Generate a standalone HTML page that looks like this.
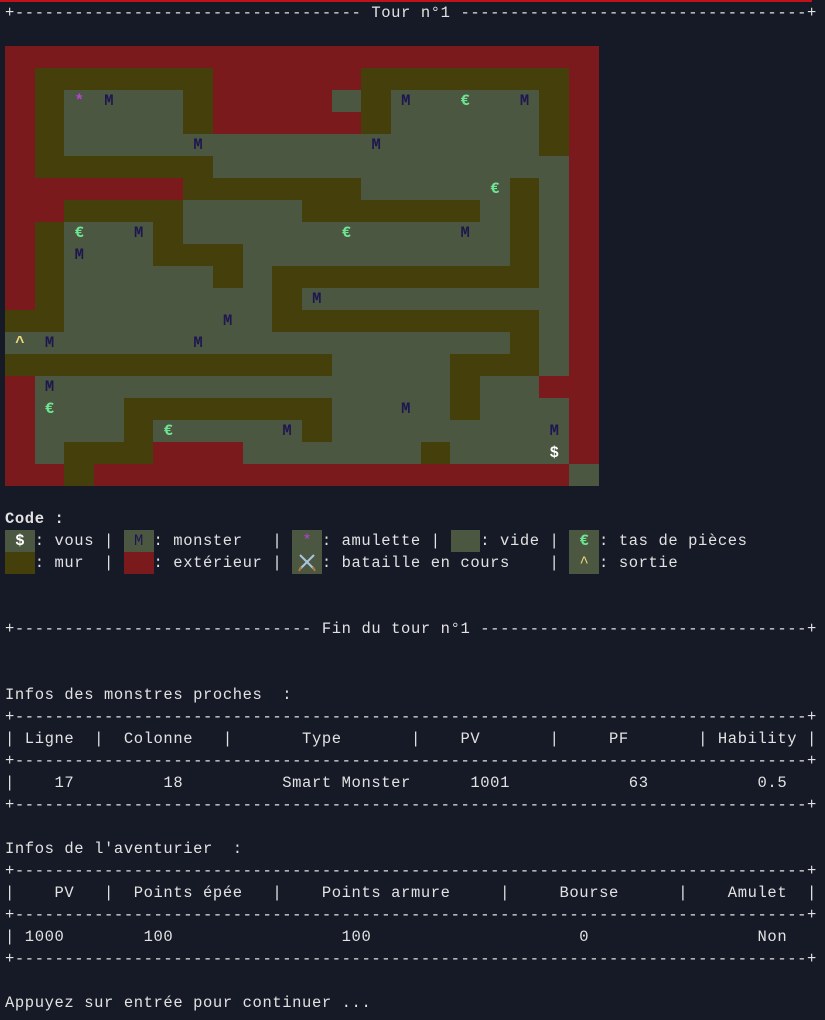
<!DOCTYPE html>
<html><head><meta charset="utf-8"><style>
html,body{margin:0;padding:0;background:#161926;width:825px;height:1020px;overflow:hidden}
body{position:relative;font-family:"Liberation Mono","DejaVu Sans Mono",monospace;font-size:15.5px;letter-spacing:0.6px;color:#e2e2e2}
.topline{position:absolute;left:0;top:0;width:812px;height:2px;background:#c1121a}
.l{position:absolute;left:5px;white-space:pre;line-height:22px;height:22px}
.maze{position:absolute;left:5px;top:46px;width:594px;letter-spacing:0}
.row{display:flex;height:22px}
.row b{display:block;width:29.7px;height:22px;line-height:22px;text-align:center;font-weight:bold}
.R{background:#7b1a1c}.W{background:#453f0b}.E{background:#4c5741}
.m{color:#1d1650}.g{color:#6ee592}.s{color:#b543d4}.x{color:#eedb7d}.d{color:#fff}
.c{display:inline-block;width:29.7px;height:22px;vertical-align:top;text-align:center;letter-spacing:0}
.bb{font-weight:bold}
</style></head><body>
<div class="topline"></div>
<div class="l" style="top:2px">+----------------------------------- Tour n°1 -----------------------------------+</div>
<div class="maze">
<div class="row"><b class=R></b><b class=R></b><b class=R></b><b class=R></b><b class=R></b><b class=R></b><b class=R></b><b class=R></b><b class=R></b><b class=R></b><b class=R></b><b class=R></b><b class=R></b><b class=R></b><b class=R></b><b class=R></b><b class=R></b><b class=R></b><b class=R></b><b class=R></b></div>
<div class="row"><b class=R></b><b class=W></b><b class=W></b><b class=W></b><b class=W></b><b class=W></b><b class=W></b><b class=R></b><b class=R></b><b class=R></b><b class=R></b><b class=R></b><b class=W></b><b class=W></b><b class=W></b><b class=W></b><b class=W></b><b class=W></b><b class=W></b><b class=R></b></div>
<div class="row"><b class=R></b><b class=W></b><b class="E s">*</b><b class="E m">M</b><b class=E></b><b class=E></b><b class=W></b><b class=R></b><b class=R></b><b class=R></b><b class=R></b><b class=E></b><b class=W></b><b class="E m">M</b><b class=E></b><b class="E g">€</b><b class=E></b><b class="E m">M</b><b class=W></b><b class=R></b></div>
<div class="row"><b class=R></b><b class=W></b><b class=E></b><b class=E></b><b class=E></b><b class=E></b><b class=W></b><b class=R></b><b class=R></b><b class=R></b><b class=R></b><b class=R></b><b class=W></b><b class=E></b><b class=E></b><b class=E></b><b class=E></b><b class=E></b><b class=W></b><b class=R></b></div>
<div class="row"><b class=R></b><b class=W></b><b class=E></b><b class=E></b><b class=E></b><b class=E></b><b class="E m">M</b><b class=E></b><b class=E></b><b class=E></b><b class=E></b><b class=E></b><b class="E m">M</b><b class=E></b><b class=E></b><b class=E></b><b class=E></b><b class=E></b><b class=W></b><b class=R></b></div>
<div class="row"><b class=R></b><b class=W></b><b class=W></b><b class=W></b><b class=W></b><b class=W></b><b class=W></b><b class=E></b><b class=E></b><b class=E></b><b class=E></b><b class=E></b><b class=E></b><b class=E></b><b class=E></b><b class=E></b><b class=E></b><b class=E></b><b class=E></b><b class=R></b></div>
<div class="row"><b class=R></b><b class=R></b><b class=R></b><b class=R></b><b class=R></b><b class=R></b><b class=W></b><b class=W></b><b class=W></b><b class=W></b><b class=W></b><b class=W></b><b class=E></b><b class=E></b><b class=E></b><b class=E></b><b class="E g">€</b><b class=W></b><b class=E></b><b class=R></b></div>
<div class="row"><b class=R></b><b class=R></b><b class=W></b><b class=W></b><b class=W></b><b class=W></b><b class=E></b><b class=E></b><b class=E></b><b class=E></b><b class=W></b><b class=W></b><b class=W></b><b class=W></b><b class=W></b><b class=W></b><b class=E></b><b class=W></b><b class=E></b><b class=R></b></div>
<div class="row"><b class=R></b><b class=W></b><b class="E g">€</b><b class=E></b><b class="E m">M</b><b class=W></b><b class=E></b><b class=E></b><b class=E></b><b class=E></b><b class=E></b><b class="E g">€</b><b class=E></b><b class=E></b><b class=E></b><b class="E m">M</b><b class=E></b><b class=W></b><b class=E></b><b class=R></b></div>
<div class="row"><b class=R></b><b class=W></b><b class="E m">M</b><b class=E></b><b class=E></b><b class=W></b><b class=W></b><b class=W></b><b class=E></b><b class=E></b><b class=E></b><b class=E></b><b class=E></b><b class=E></b><b class=E></b><b class=E></b><b class=E></b><b class=W></b><b class=E></b><b class=R></b></div>
<div class="row"><b class=R></b><b class=W></b><b class=E></b><b class=E></b><b class=E></b><b class=E></b><b class=E></b><b class=W></b><b class=E></b><b class=W></b><b class=W></b><b class=W></b><b class=W></b><b class=W></b><b class=W></b><b class=W></b><b class=W></b><b class=W></b><b class=E></b><b class=R></b></div>
<div class="row"><b class=R></b><b class=W></b><b class=E></b><b class=E></b><b class=E></b><b class=E></b><b class=E></b><b class=E></b><b class=E></b><b class=W></b><b class="E m">M</b><b class=E></b><b class=E></b><b class=E></b><b class=E></b><b class=E></b><b class=E></b><b class=E></b><b class=E></b><b class=R></b></div>
<div class="row"><b class=W></b><b class=W></b><b class=E></b><b class=E></b><b class=E></b><b class=E></b><b class=E></b><b class="E m">M</b><b class=E></b><b class=W></b><b class=W></b><b class=W></b><b class=W></b><b class=W></b><b class=W></b><b class=W></b><b class=W></b><b class=W></b><b class=E></b><b class=R></b></div>
<div class="row"><b class="E x">^</b><b class="E m">M</b><b class=E></b><b class=E></b><b class=E></b><b class=E></b><b class="E m">M</b><b class=E></b><b class=E></b><b class=E></b><b class=E></b><b class=E></b><b class=E></b><b class=E></b><b class=E></b><b class=E></b><b class=E></b><b class=W></b><b class=E></b><b class=R></b></div>
<div class="row"><b class=W></b><b class=W></b><b class=W></b><b class=W></b><b class=W></b><b class=W></b><b class=W></b><b class=W></b><b class=W></b><b class=W></b><b class=W></b><b class=E></b><b class=E></b><b class=E></b><b class=E></b><b class=W></b><b class=W></b><b class=W></b><b class=E></b><b class=R></b></div>
<div class="row"><b class=R></b><b class="E m">M</b><b class=E></b><b class=E></b><b class=E></b><b class=E></b><b class=E></b><b class=E></b><b class=E></b><b class=E></b><b class=E></b><b class=E></b><b class=E></b><b class=E></b><b class=E></b><b class=W></b><b class=E></b><b class=E></b><b class=R></b><b class=R></b></div>
<div class="row"><b class=R></b><b class="E g">€</b><b class=E></b><b class=E></b><b class=W></b><b class=W></b><b class=W></b><b class=W></b><b class=W></b><b class=W></b><b class=W></b><b class=E></b><b class=E></b><b class="E m">M</b><b class=E></b><b class=W></b><b class=E></b><b class=E></b><b class=E></b><b class=R></b></div>
<div class="row"><b class=R></b><b class=E></b><b class=E></b><b class=E></b><b class=W></b><b class="E g">€</b><b class=E></b><b class=E></b><b class=E></b><b class="E m">M</b><b class=W></b><b class=E></b><b class=E></b><b class=E></b><b class=E></b><b class=E></b><b class=E></b><b class=E></b><b class="E m">M</b><b class=R></b></div>
<div class="row"><b class=R></b><b class=E></b><b class=W></b><b class=W></b><b class=W></b><b class=R></b><b class=R></b><b class=R></b><b class=E></b><b class=E></b><b class=E></b><b class=E></b><b class=E></b><b class=E></b><b class=W></b><b class=E></b><b class=E></b><b class=E></b><b class="E d">$</b><b class=R></b></div>
<div class="row"><b class=R></b><b class=R></b><b class=W></b><b class=R></b><b class=R></b><b class=R></b><b class=R></b><b class=R></b><b class=R></b><b class=R></b><b class=R></b><b class=R></b><b class=R></b><b class=R></b><b class=R></b><b class=R></b><b class=R></b><b class=R></b><b class=R></b><b class=E></b></div>
</div>
<div class="l" style="top:508px;font-weight:bold">Code :</div>
<div class="l" style="top:530px"><span class="c E d bb">$</span>: vous | <span class="c E m">M</span>: monster   | <span class="c E s">*</span>: amulette | <span class="c E"></span>: vide | <span class="c E g bb">€</span>: tas de pièces</div>
<div class="l" style="top:552px"><span class="c W"></span>: mur  | <span class="c R"></span>: extérieur | <span class="c E"><svg width="22" height="22" viewBox="0 0 22 22"><path d="M4 3 L18 17 M18 3 L4 17" stroke="#a9c6de" stroke-width="2"/><path d="M5 15 L3 19 M17 15 L19 19" stroke="#b0783a" stroke-width="2"/></svg></span>: bataille en cours    | <span class="c E x">^</span>: sortie</div>
<div class="l" style="top:618px">+------------------------------ Fin du tour n°1 ---------------------------------+</div>
<div class="l" style="top:684px">Infos des monstres proches  :</div>
<div class="l" style="top:706px">+--------------------------------------------------------------------------------+</div>
<div class="l" style="top:728px">| Ligne  |  Colonne   |       Type       |    PV       |     PF       | Hability |</div>
<div class="l" style="top:750px">+--------------------------------------------------------------------------------+</div>
<div class="l" style="top:772px">|    17         18          Smart Monster      1001            63           0.5</div>
<div class="l" style="top:794px">+--------------------------------------------------------------------------------+</div>
<div class="l" style="top:838px">Infos de l'aventurier  :</div>
<div class="l" style="top:860px">+--------------------------------------------------------------------------------+</div>
<div class="l" style="top:882px">|    PV   |  Points épée   |    Points armure     |     Bourse      |    Amulet  |</div>
<div class="l" style="top:904px">+--------------------------------------------------------------------------------+</div>
<div class="l" style="top:926px">| 1000        100                 100                     0                 Non</div>
<div class="l" style="top:948px">+--------------------------------------------------------------------------------+</div>
<div class="l" style="top:992px">Appuyez sur entrée pour continuer ...</div>
</body></html>
